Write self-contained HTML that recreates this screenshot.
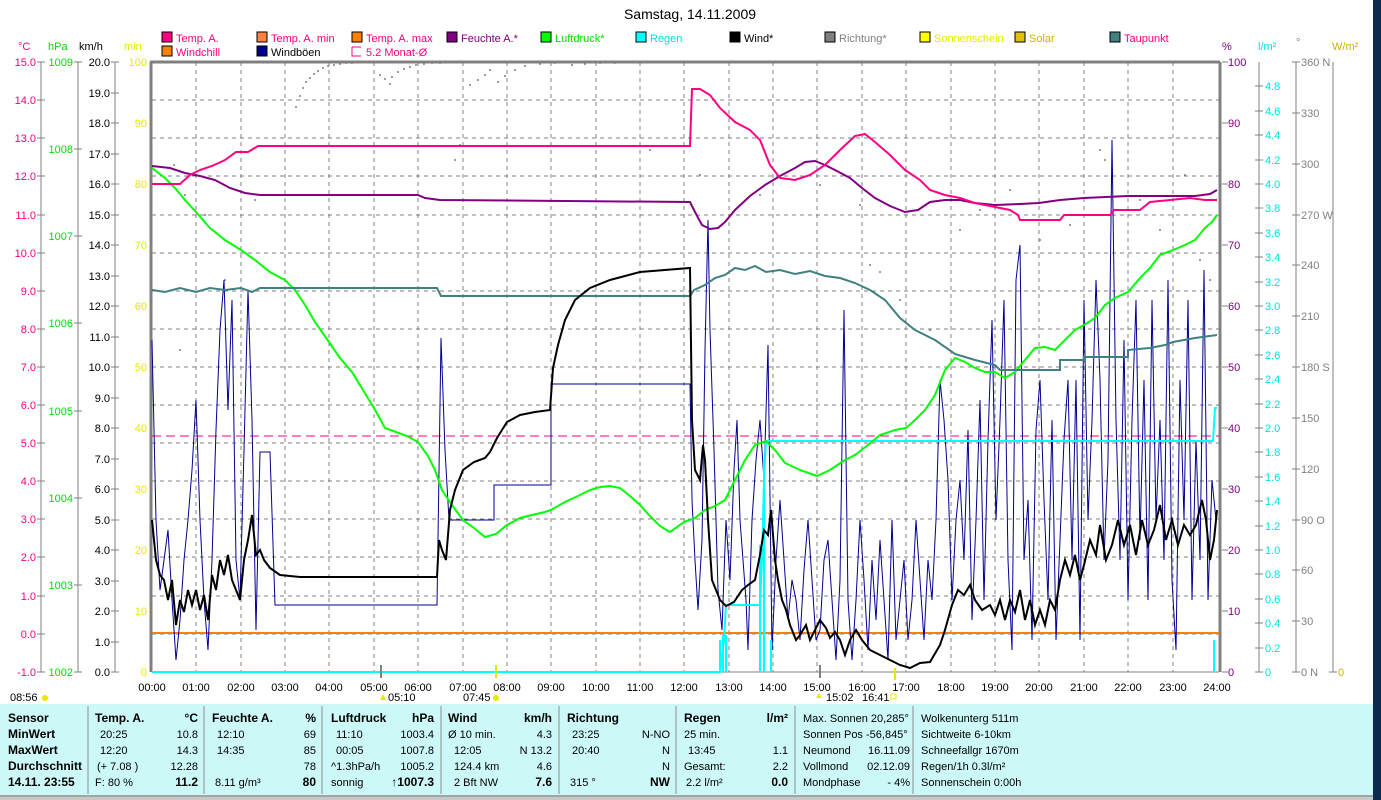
<!DOCTYPE html>
<html><head><meta charset="utf-8"><style>
html,body{margin:0;padding:0;background:#fff;overflow:hidden}
svg{display:block;font-family:"Liberation Sans",sans-serif}
.t{font-size:11px}
.b{font-size:12px;font-weight:bold}
.r{text-anchor:end}
</style></head><body>
<svg width="1381" height="800" viewBox="0 0 1381 800" xmlns="http://www.w3.org/2000/svg">
<rect x="0" y="0" width="1381" height="800" fill="#fff"/>
<rect x="1373" y="0" width="8" height="800" fill="#0b2a4e"/>
<text x="690" y="19" font-size="14" text-anchor="middle">Samstag, 14.11.2009</text>

<!-- legend -->
<g class="t">
<rect x="162" y="32" width="10" height="10" fill="#ff0080" stroke="#000"/><text x="176" y="42" fill="#ff0080">Temp. A.</text>
<rect x="257" y="32" width="10" height="10" fill="#ff8040" stroke="#000"/><text x="271" y="42" fill="#ff0080">Temp. A. min</text>
<rect x="352" y="32" width="10" height="10" fill="#ff8000" stroke="#000"/><text x="366" y="42" fill="#ff0080">Temp. A. max</text>
<rect x="447" y="32" width="10" height="10" fill="#800080" stroke="#000"/><text x="461" y="42" fill="#800080">Feuchte A.*</text>
<rect x="541" y="32" width="10" height="10" fill="#00ff00" stroke="#000"/><text x="555" y="42" fill="#00e000">Luftdruck*</text>
<rect x="636" y="32" width="10" height="10" fill="#00ffff" stroke="#000"/><text x="650" y="42" fill="#00e0e0">Regen</text>
<rect x="730" y="32" width="10" height="10" fill="#000" stroke="#000"/><text x="744" y="42">Wind*</text>
<rect x="825" y="32" width="10" height="10" fill="#808080" stroke="#000"/><text x="839" y="42" fill="#808080">Richtung*</text>
<rect x="920" y="32" width="10" height="10" fill="#ffff00" stroke="#000"/><text x="934" y="42" fill="#e8e800">Sonnenschein</text>
<rect x="1015" y="32" width="10" height="10" fill="#e0c000" stroke="#000"/><text x="1029" y="42" fill="#d0b000">Solar</text>
<rect x="1110" y="32" width="10" height="10" fill="#408080" stroke="#000"/><text x="1124" y="42" fill="#ff0080">Taupunkt</text>
<rect x="162" y="46" width="10" height="10" fill="#ff8000" stroke="#000"/><text x="176" y="56" fill="#ff0080">Windchill</text>
<rect x="257" y="46" width="10" height="10" fill="#000090" stroke="#000"/><text x="271" y="56">Windböen</text>
<path d="M352 47 h9 M352 47 v9 h9" stroke="#ff0080" fill="none"/><text x="366" y="56" fill="#ff0080">5.2 Monat-Ø</text>
</g>

<!-- unit headers -->
<g class="t">
<text x="18" y="50" fill="#ff0080">°C</text>
<text x="48" y="50" fill="#00e000">hPa</text>
<text x="79" y="50">km/h</text>
<text x="124" y="50" fill="#e8e800">min</text>
<text x="1222" y="50" fill="#800080">%</text>
<text x="1258" y="50" fill="#00e0e0">l/m²</text>
<text x="1296" y="46" fill="#808080">°</text>
<text x="1332" y="50" fill="#d0b000">W/m²</text>
</g>

<!-- grid -->
<g stroke="#808080" stroke-dasharray="4,4" stroke-width="1">
<path d="M196 62V672M241 62V672M285 62V672M329 62V672M374 62V672M418 62V672M463 62V672M507 62V672M551 62V672M596 62V672M640 62V672M684 62V672M729 62V672M773 62V672M817 62V672M862 62V672M906 62V672M951 62V672M995 62V672M1039 62V672M1084 62V672M1128 62V672M1173 62V672"/>
<path d="M152 100H1219M152 138H1219M152 176H1219M152 215H1219M152 253H1219M152 291H1219M152 329H1219M152 367H1219M152 405H1219M152 443H1219M152 481H1219M152 519H1219M152 557H1219M152 596H1219M152 634H1219"/>
</g>
<g stroke="#808080" fill="none">
<path d="M150 62H1220" stroke-width="3"/>
<path d="M151 62V672" stroke-width="3"/>
<path d="M1220 62V672" stroke-width="3"/>
<path d="M152 672H1219" stroke-width="1"/>
<!-- left axes -->
<path d="M41 62V672M78 62V672M115 62V672"/>
<path d="M1259 62V672M1296 62V672M1333 62V672"/>
<path d="M1222 62h6M1222 123h6M1222 184h6M1222 245h6M1222 306h6M1222 367h6M1222 428h6M1222 489h6M1222 550h6M1222 611h6M1222 672h6"/>
</g>
<g stroke="#808080" id="tk">
<path d="M37 62h8M37 100h8M37 138h8M37 176h8M37 215h8M37 253h8M37 291h8M37 329h8M37 367h8M37 405h8M37 443h8M37 481h8M37 519h8M37 557h8M37 596h8M37 634h8M37 672h8"/>
<path d="M74 62h8M74 149h8M74 236h8M74 323h8M74 411h8M74 498h8M74 585h8M74 672h8"/>
<path d="M111 62h8M111 93h8M111 123h8M111 154h8M111 184h8M111 215h8M111 245h8M111 276h8M111 306h8M111 337h8M111 367h8M111 398h8M111 428h8M111 459h8M111 489h8M111 520h8M111 550h8M111 581h8M111 611h8M111 642h8M111 672h8"/>
<path d="M1255 86h8M1255 111h8M1255 135h8M1255 160h8M1255 184h8M1255 208h8M1255 233h8M1255 257h8M1255 282h8M1255 306h8M1255 330h8M1255 355h8M1255 379h8M1255 404h8M1255 428h8M1255 452h8M1255 477h8M1255 501h8M1255 526h8M1255 550h8M1255 574h8M1255 599h8M1255 623h8M1255 648h8M1255 672h8"/>
<path d="M1292 62h8M1292 113h8M1292 164h8M1292 215h8M1292 265h8M1292 316h8M1292 367h8M1292 418h8M1292 469h8M1292 520h8M1292 570h8M1292 621h8M1292 672h8"/>
<path d="M1329 672h8"/>
</g>

<!-- axis labels -->
<g class="t r" fill="#ff0080">
<text x="36" y="66">15.0</text><text x="36" y="104">14.0</text><text x="36" y="142">13.0</text><text x="36" y="180">12.0</text><text x="36" y="219">11.0</text><text x="36" y="257">10.0</text><text x="36" y="295">9.0</text><text x="36" y="333">8.0</text><text x="36" y="371">7.0</text><text x="36" y="409">6.0</text><text x="36" y="447">5.0</text><text x="36" y="485">4.0</text><text x="36" y="523">3.0</text><text x="36" y="561">2.0</text><text x="36" y="600">1.0</text><text x="36" y="638">0.0</text><text x="36" y="676">-1.0</text>
</g>
<g class="t r" fill="#00e000">
<text x="73" y="66">1009</text><text x="73" y="153">1008</text><text x="73" y="240">1007</text><text x="73" y="327">1006</text><text x="73" y="415">1005</text><text x="73" y="502">1004</text><text x="73" y="589">1003</text><text x="73" y="676">1002</text>
</g>
<g class="t r" fill="#000">
<text x="110" y="66">20.0</text><text x="110" y="97">19.0</text><text x="110" y="127">18.0</text><text x="110" y="158">17.0</text><text x="110" y="188">16.0</text><text x="110" y="219">15.0</text><text x="110" y="249">14.0</text><text x="110" y="280">13.0</text><text x="110" y="310">12.0</text><text x="110" y="341">11.0</text><text x="110" y="371">10.0</text><text x="110" y="402">9.0</text><text x="110" y="432">8.0</text><text x="110" y="463">7.0</text><text x="110" y="493">6.0</text><text x="110" y="524">5.0</text><text x="110" y="554">4.0</text><text x="110" y="585">3.0</text><text x="110" y="615">2.0</text><text x="110" y="646">1.0</text><text x="110" y="676">0.0</text>
</g>
<g class="t r" fill="#e8e800">
<text x="147" y="66">100</text><text x="147" y="127">90</text><text x="147" y="188">80</text><text x="147" y="249">70</text><text x="147" y="310">60</text><text x="147" y="371">50</text><text x="147" y="432">40</text><text x="147" y="493">30</text><text x="147" y="554">20</text><text x="147" y="615">10</text><text x="147" y="676">0</text>
</g>
<g class="t" fill="#800080">
<text x="1228" y="66">100</text><text x="1228" y="127">90</text><text x="1228" y="188">80</text><text x="1228" y="249">70</text><text x="1228" y="310">60</text><text x="1228" y="371">50</text><text x="1228" y="432">40</text><text x="1228" y="493">30</text><text x="1228" y="554">20</text><text x="1228" y="615">10</text><text x="1228" y="676">0</text>
</g>
<g class="t" fill="#00e0e0">
<text x="1265" y="90">4.8</text><text x="1265" y="115">4.6</text><text x="1265" y="139">4.4</text><text x="1265" y="164">4.2</text><text x="1265" y="188">4.0</text><text x="1265" y="212">3.8</text><text x="1265" y="237">3.6</text><text x="1265" y="261">3.4</text><text x="1265" y="286">3.2</text><text x="1265" y="310">3.0</text><text x="1265" y="334">2.8</text><text x="1265" y="359">2.6</text><text x="1265" y="383">2.4</text><text x="1265" y="408">2.2</text><text x="1265" y="432">2.0</text><text x="1265" y="456">1.8</text><text x="1265" y="481">1.6</text><text x="1265" y="505">1.4</text><text x="1265" y="530">1.2</text><text x="1265" y="554">1.0</text><text x="1265" y="578">0.8</text><text x="1265" y="603">0.6</text><text x="1265" y="627">0.4</text><text x="1265" y="652">0.2</text><text x="1265" y="676">0</text>
</g>
<g class="t" fill="#808080">
<text x="1301" y="66">360 N</text><text x="1301" y="117">330</text><text x="1301" y="168">300</text><text x="1301" y="219">270 W</text><text x="1301" y="269">240</text><text x="1301" y="320">210</text><text x="1301" y="371">180 S</text><text x="1301" y="422">150</text><text x="1301" y="473">120</text><text x="1301" y="524">90  O</text><text x="1301" y="574">60</text><text x="1301" y="625">30</text><text x="1301" y="676">0  N</text>
</g>
<text x="1338" y="676" class="t" fill="#d0b000">0</text>

<!-- Richtung dots -->
<g fill="#808080">
<circle cx="296" cy="107" r="1"/><circle cx="300" cy="96" r="1"/><circle cx="303" cy="88" r="1"/><circle cx="306" cy="82" r="1"/><circle cx="310" cy="78" r="1"/><circle cx="314" cy="74" r="1"/><circle cx="318" cy="71" r="1"/><circle cx="323" cy="68" r="1"/><circle cx="328" cy="66" r="1"/><circle cx="334" cy="65" r="1"/><circle cx="340" cy="64" r="1"/><circle cx="346" cy="63" r="1"/><circle cx="352" cy="63" r="1"/>
<circle cx="380" cy="75" r="1"/><circle cx="385" cy="79" r="1"/><circle cx="390" cy="84" r="1"/><circle cx="392" cy="77" r="1"/><circle cx="398" cy="72" r="1"/><circle cx="404" cy="69" r="1"/><circle cx="410" cy="67" r="1"/><circle cx="416" cy="65" r="1"/><circle cx="424" cy="64" r="1"/><circle cx="432" cy="63" r="1"/><circle cx="440" cy="63" r="1"/>
<circle cx="470" cy="85" r="1"/><circle cx="478" cy="80" r="1"/><circle cx="485" cy="75" r="1"/><circle cx="490" cy="70" r="1"/><circle cx="498" cy="82" r="1"/><circle cx="505" cy="76" r="1"/><circle cx="515" cy="70" r="1"/><circle cx="525" cy="66" r="1"/><circle cx="540" cy="64" r="1"/><circle cx="555" cy="63" r="1"/><circle cx="572" cy="65" r="1"/><circle cx="585" cy="64" r="1"/><circle cx="600" cy="63" r="1"/><circle cx="615" cy="63" r="1"/>
<circle cx="174" cy="165" r="1"/><circle cx="185" cy="195" r="1"/><circle cx="205" cy="215" r="1"/><circle cx="225" cy="280" r="1"/><circle cx="180" cy="350" r="1"/><circle cx="255" cy="200" r="1"/><circle cx="460" cy="145" r="1"/><circle cx="455" cy="160" r="1"/><circle cx="650" cy="150" r="1"/><circle cx="700" cy="175" r="1"/><circle cx="760" cy="195" r="1"/><circle cx="820" cy="185" r="1"/><circle cx="860" cy="205" r="1"/><circle cx="870" cy="265" r="1"/><circle cx="880" cy="272" r="1"/><circle cx="900" cy="300" r="1"/><circle cx="930" cy="330" r="1"/><circle cx="960" cy="230" r="1"/><circle cx="980" cy="210" r="1"/><circle cx="1010" cy="190" r="1"/><circle cx="1040" cy="240" r="1"/><circle cx="1070" cy="225" r="1"/><circle cx="1100" cy="150" r="1"/><circle cx="1105" cy="160" r="1"/><circle cx="1140" cy="200" r="1"/><circle cx="1160" cy="230" r="1"/><circle cx="1185" cy="175" r="1"/><circle cx="1200" cy="260" r="1"/><circle cx="1210" cy="280" r="1"/>
</g>

<!-- Monat-Ø dashed -->
<path d="M152 436H1219" stroke="#ff0080" stroke-dasharray="9,5" fill="none"/>
<!-- windchill / min -->
<path d="M152 633H1219" stroke="#ff8000" stroke-width="2" fill="none"/>

<!-- Windböen -->
<polyline fill="none" stroke="#000090" stroke-width="1" points="152,340 156,520 160,590 164,560 168,530 172,600 176,660 180,620 184,560 188,520 192,470 196,400 200,520 204,600 208,650 212,560 216,430 220,330 224,280 228,410 232,300 236,560 240,600 244,450 248,290 252,420 256,630 260,452 270,452 275,605 437,605 441,338 445,450 449,520 494,520 494,485 551,485 551,384 690,384 692,500 695,560 698,610 702,540 705,350 708,220 710,330 714,450 718,590 722,630 726,520 730,580 734,470 737,420 740,520 743,560 746,600 748,650 752,520 756,460 760,420 764,480 768,345 772,650 776,560 780,500 784,560 788,620 792,580 796,600 800,640 804,570 808,520 812,580 816,640 820,630 824,560 828,540 832,600 836,660 840,580 844,310 848,600 852,660 856,600 860,520 864,580 868,650 872,560 876,620 880,540 884,600 888,660 892,520 896,640 900,600 904,560 908,640 912,600 916,520 920,580 924,640 928,560 932,600 936,520 940,380 944,420 948,480 952,600 956,520 960,480 964,560 968,430 972,620 976,520 980,400 984,600 988,440 992,320 996,520 1000,420 1004,300 1008,560 1012,650 1016,280 1020,245 1024,560 1028,500 1032,640 1036,430 1040,380 1044,500 1048,600 1052,420 1056,640 1060,540 1064,440 1068,380 1072,560 1076,380 1080,640 1084,300 1088,520 1092,420 1096,280 1100,380 1104,560 1108,460 1112,140 1116,420 1120,560 1124,340 1128,600 1132,420 1136,300 1140,540 1144,380 1148,600 1152,300 1156,520 1160,420 1164,560 1168,280 1172,580 1176,650 1180,380 1184,520 1188,300 1192,600 1196,440 1200,560 1204,270 1208,600 1212,480 1216,520"/>

<!-- Regen -->
<polyline fill="none" stroke="#00ffff" stroke-width="2" points="152,672 720,672 724,640 726,605 760,605 762,560 764,480 766,441 1213,441 1215,408 1217,408"/>
<path d="M720 672V640M723 672V635M726 672V635M760 672V545M764 672V460M771 672V640M1214 672V640" stroke="#00ffff" stroke-width="2"/>

<!-- Luftdruck -->
<polyline fill="none" stroke="#00ff00" stroke-width="2" points="152,168 165,178 175,188 185,200 196,212 210,228 225,240 241,250 255,260 270,272 285,280 295,290 305,305 315,322 329,342 340,358 352,372 363,390 374,408 385,428 396,432 407,436 418,442 428,456 435,470 442,490 452,505 463,520 474,528 485,537 496,534 507,525 520,518 532,515 545,512 551,510 565,502 578,496 590,490 600,487 610,486 620,488 630,496 640,505 650,516 660,526 670,532 684,522 695,518 705,510 715,506 725,500 735,480 745,460 755,445 766,441 775,450 785,463 800,470 817,476 830,470 845,460 855,455 868,445 880,435 895,430 906,428 915,420 925,410 935,395 945,370 955,358 965,362 975,368 985,372 995,372 1005,378 1015,372 1025,360 1035,348 1045,347 1055,350 1065,340 1075,330 1084,325 1095,318 1105,305 1115,298 1128,292 1140,278 1150,268 1160,255 1173,250 1185,245 1195,240 1205,228 1212,222 1217,215"/>

<!-- Taupunkt -->
<polyline fill="none" stroke="#408080" stroke-width="2" points="152,290 165,292 180,288 196,292 210,288 225,290 241,288 252,292 260,288 437,288 441,296 690,296 694,290 705,285 715,278 725,275 735,268 745,270 755,266 766,272 780,270 795,274 810,271 825,276 840,278 855,283 870,290 885,300 900,318 915,330 935,340 955,354 975,360 995,365 1000,370 1060,370 1060,360 1084,360 1084,357 1128,357 1128,350 1150,348 1165,345 1173,342 1195,338 1217,335"/>

<!-- Feuchte -->
<polyline fill="none" stroke="#800080" stroke-width="2" points="152,166 170,168 185,173 200,176 215,180 230,188 245,193 260,195 418,195 425,198 440,200 690,202 695,212 702,225 710,229 718,228 725,222 735,210 750,196 765,185 780,176 795,168 805,162 815,161 825,165 835,170 850,178 862,188 875,198 890,206 905,212 918,210 930,202 945,200 960,200 975,203 995,205 1020,204 1039,203 1060,200 1084,198 1128,196 1173,196 1195,196 1210,194 1217,190"/>

<!-- Temp A -->
<polyline fill="none" stroke="#ff0080" stroke-width="2" points="152,184 180,184 190,175 200,170 212,166 225,160 236,152 248,152 258,146 690,146 692,89 700,89 710,95 720,108 735,122 750,130 760,140 770,165 780,178 795,180 810,175 825,165 840,150 855,136 865,134 875,142 890,155 905,170 920,180 930,190 945,195 960,198 975,203 990,206 1010,210 1018,215 1020,220 1060,220 1064,215 1110,215 1114,210 1140,210 1150,202 1170,200 1190,198 1205,200 1217,200"/>

<!-- Wind -->
<polyline fill="none" stroke="#000" stroke-width="2" points="152,520 156,560 160,575 164,580 168,600 172,580 176,625 180,600 184,612 188,590 192,605 196,590 200,610 204,595 208,620 212,575 216,590 220,560 224,575 228,555 232,580 236,590 240,600 244,560 248,540 252,515 256,555 260,550 264,560 270,568 280,575 300,577 437,577 439,540 442,550 446,560 450,510 455,490 463,470 474,462 485,458 490,452 497,438 507,422 520,415 535,412 550,410 553,368 558,345 565,320 575,300 590,288 610,280 640,272 690,268 692,420 695,470 700,480 703,445 705,460 708,520 712,580 716,590 720,600 726,606 734,602 742,590 748,585 755,580 760,555 764,530 768,535 771,510 775,560 778,580 782,600 786,610 790,625 796,640 800,635 806,625 810,640 815,630 820,620 826,628 830,638 835,632 840,640 845,655 850,640 856,630 862,640 870,650 880,655 890,660 900,665 910,668 920,663 930,662 940,645 945,630 952,605 958,590 964,595 970,585 975,600 982,610 990,605 995,615 1000,600 1005,620 1010,600 1015,612 1020,590 1025,620 1030,600 1035,625 1040,610 1045,625 1050,600 1055,610 1060,580 1065,560 1070,575 1075,555 1080,580 1084,565 1090,540 1096,555 1100,525 1106,560 1112,545 1118,520 1124,545 1130,525 1136,555 1142,520 1148,545 1154,530 1160,505 1166,540 1172,520 1178,545 1184,525 1190,535 1196,525 1202,500 1206,520 1210,560 1214,540 1217,510"/>

<!-- sun markers -->
<path d="M381 665V678" stroke="#808080" stroke-width="2"/><path d="M496 665V678" stroke="#e8e800" stroke-width="2"/><path d="M820 665V678" stroke="#808080" stroke-width="2"/><path d="M895 668V680" stroke="#e8e800" stroke-width="2"/>

<!-- time labels -->
<g class="t" text-anchor="middle">
<text x="152" y="691">00:00</text><text x="196" y="691">01:00</text><text x="241" y="691">02:00</text><text x="285" y="691">03:00</text><text x="329" y="691">04:00</text><text x="374" y="691">05:00</text><text x="418" y="691">06:00</text><text x="463" y="691">07:00</text><text x="507" y="691">08:00</text><text x="551" y="691">09:00</text><text x="596" y="691">10:00</text><text x="640" y="691">11:00</text><text x="684" y="691">12:00</text><text x="729" y="691">13:00</text><text x="773" y="691">14:00</text><text x="817" y="691">15:00</text><text x="862" y="691">16:00</text><text x="906" y="691">17:00</text><text x="951" y="691">18:00</text><text x="995" y="691">19:00</text><text x="1039" y="691">20:00</text><text x="1084" y="691">21:00</text><text x="1128" y="691">22:00</text><text x="1173" y="691">23:00</text><text x="1217" y="691">24:00</text>
</g>
<g class="t">
<text x="10" y="701">08:56</text><circle cx="45" cy="698" r="3" fill="#e8e800"/>
<text x="388" y="701">05:10</text><path d="M383 694l-3 6h6z" fill="#e8e800"/>
<text x="463" y="701">07:45</text><circle cx="496" cy="698" r="3" fill="#e8e800"/>
<text x="826" y="701">15:02</text><path d="M819 693l-3 5h6z" fill="#e8e800"/>
<text x="862" y="701">16:41</text><rect x="891" y="694" width="5" height="5" fill="none" stroke="#e8e800"/>
</g>

<!-- table -->
<rect x="0" y="704" width="1373" height="91" fill="#ccf8f8"/>
<rect x="0" y="795" width="1373" height="5" fill="#c8c8c8"/>
<path d="M0 796H1373" stroke="#808080"/>
<g stroke="#909090"><path d="M88 706V794M204 706V794M322 706V794M441 706V794M559 706V794M676 706V794M795 706V794M913 706V794"/></g>
<g class="b">
<text x="8" y="722">Sensor</text><text x="8" y="738">MinWert</text><text x="8" y="754">MaxWert</text><text x="8" y="770">Durchschnitt</text><text x="8" y="786">14.11. 23:55</text>
<text x="95" y="722">Temp. A.</text><text x="198" y="722" class="r">°C</text>
<text x="212" y="722">Feuchte A.</text><text x="316" y="722" class="r">%</text>
<text x="331" y="722">Luftdruck</text><text x="434" y="722" class="r">hPa</text>
<text x="448" y="722">Wind</text><text x="552" y="722" class="r">km/h</text>
<text x="567" y="722">Richtung</text>
<text x="684" y="722">Regen</text><text x="788" y="722" class="r">l/m²</text>
<text x="198" y="786" class="r">11.2</text><text x="316" y="786" class="r">80</text><text x="434" y="786" class="r">↑1007.3</text><text x="552" y="786" class="r">7.6</text><text x="670" y="786" class="r">NW</text><text x="788" y="786" class="r">0.0</text>
</g>
<g class="t">
<text x="100" y="738">20:25</text><text x="198" y="738" class="r">10.8</text>
<text x="100" y="754">12:20</text><text x="198" y="754" class="r">14.3</text>
<text x="97" y="770">(+ 7.08 )</text><text x="198" y="770" class="r">12.28</text>
<text x="95" y="786">F: 80 %</text>
<text x="217" y="738">12:10</text><text x="316" y="738" class="r">69</text>
<text x="217" y="754">14:35</text><text x="316" y="754" class="r">85</text>
<text x="316" y="770" class="r">78</text>
<text x="215" y="786">8.11 g/m³</text>
<text x="336" y="738">11:10</text><text x="434" y="738" class="r">1003.4</text>
<text x="336" y="754">00:05</text><text x="434" y="754" class="r">1007.8</text>
<text x="331" y="770">^1.3hPa/h</text><text x="434" y="770" class="r">1005.2</text>
<text x="331" y="786">sonnig</text>
<text x="448" y="738">Ø 10 min.</text><text x="552" y="738" class="r">4.3</text>
<text x="454" y="754">12:05</text><text x="552" y="754" class="r">N 13.2</text>
<text x="454" y="770">124.4 km</text><text x="552" y="770" class="r">4.6</text>
<text x="454" y="786">2 Bft NW</text>
<text x="572" y="738">23:25</text><text x="670" y="738" class="r">N-NO</text>
<text x="572" y="754">20:40</text><text x="670" y="754" class="r">N</text>
<text x="670" y="770" class="r">N</text>
<text x="570" y="786">315 °</text>
<text x="684" y="738">25 min.</text>
<text x="688" y="754">13:45</text><text x="788" y="754" class="r">1.1</text>
<text x="684" y="770">Gesamt:</text><text x="788" y="770" class="r">2.2</text>
<text x="686" y="786">2.2 l/m²</text>
<text x="803" y="722">Max. Sonnen 20,285°</text>
<text x="803" y="738">Sonnen Pos -56,845°</text>
<text x="803" y="754">Neumond</text><text x="910" y="754" class="r">16.11.09</text>
<text x="803" y="770">Vollmond</text><text x="910" y="770" class="r">02.12.09</text>
<text x="803" y="786">Mondphase</text><text x="910" y="786" class="r">- 4%</text>
<text x="921" y="722">Wolkenunterg  511m</text>
<text x="921" y="738">Sichtweite     6-10km</text>
<text x="921" y="754">Schneefallgr  1670m</text>
<text x="921" y="770">Regen/1h      0.3l/m²</text>
<text x="921" y="786">Sonnenschein  0:00h</text>
</g>
</svg>
</body></html>
